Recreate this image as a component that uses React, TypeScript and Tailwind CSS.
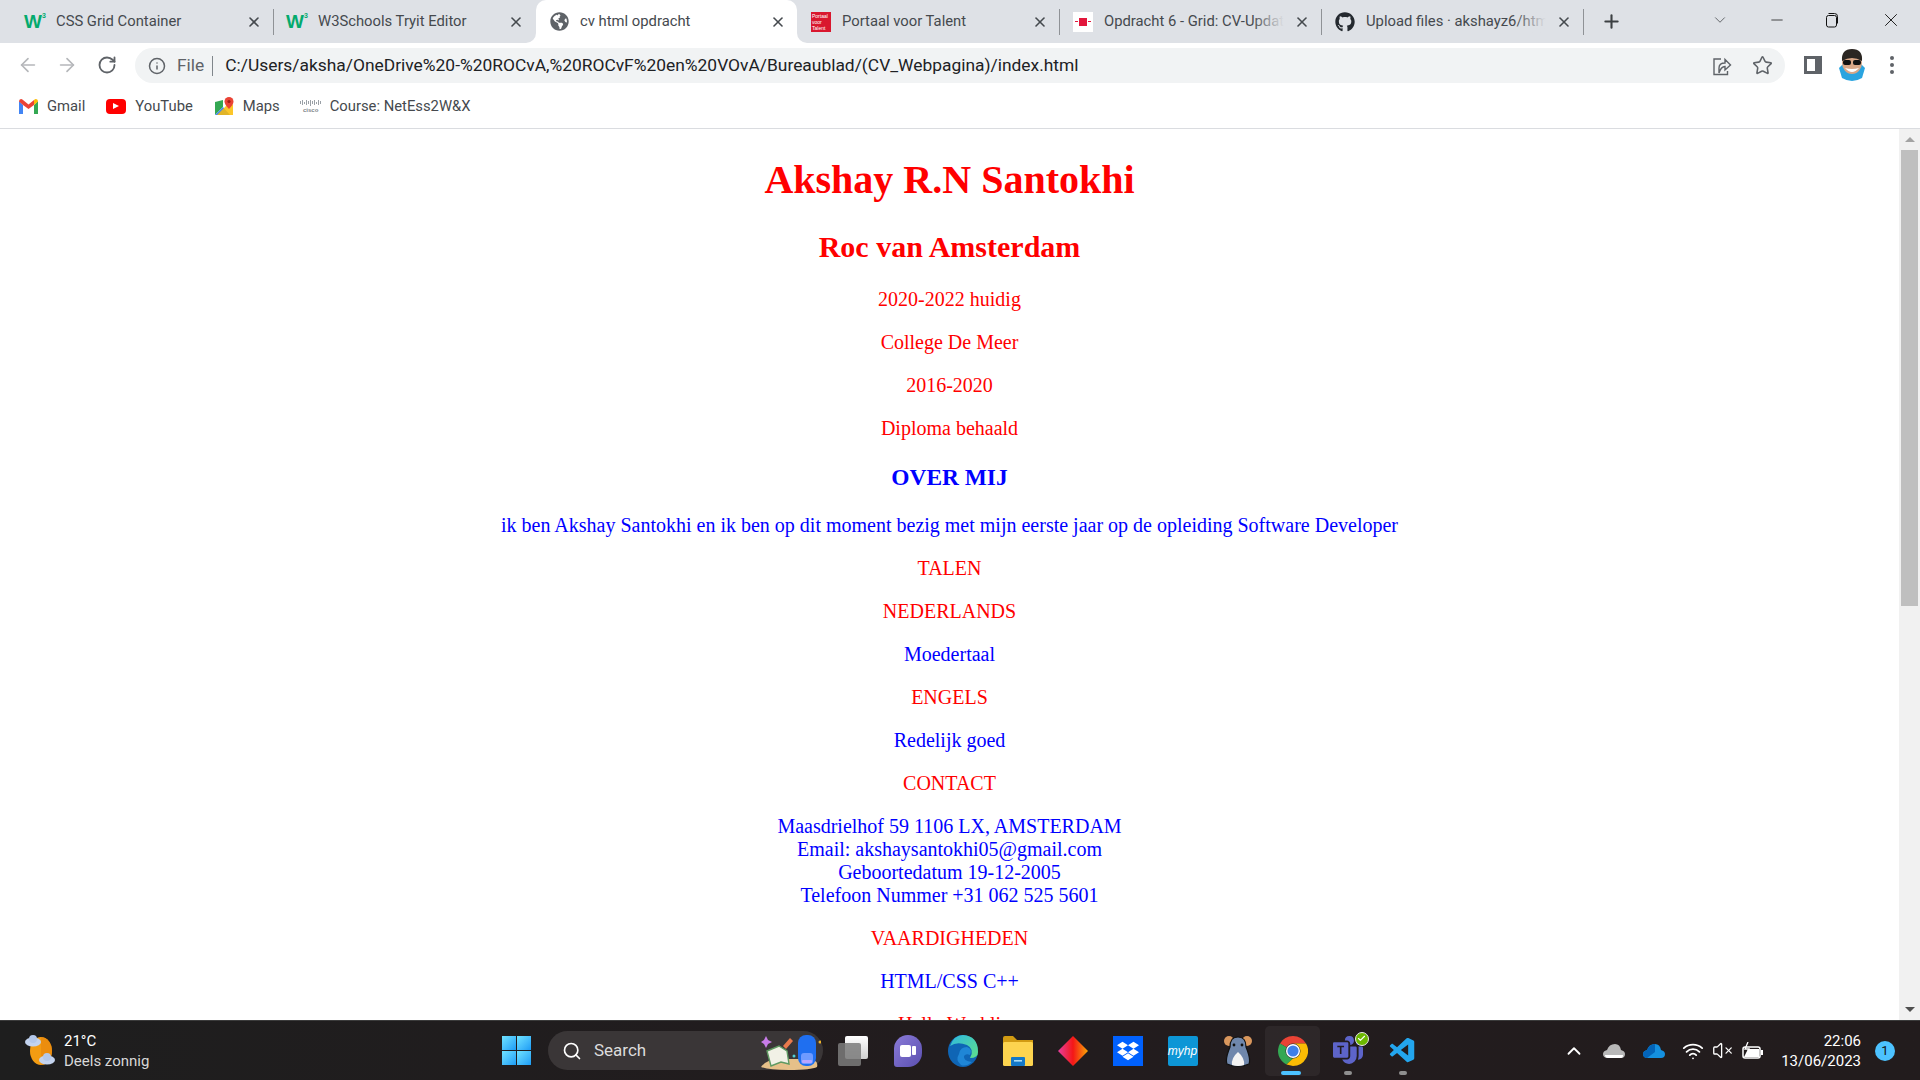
import { ArrowLeft, ArrowRight, Check, ChevronDown, ChevronUp, Info, Minus, Plus, RotateCw, Search, Star, VolumeX, Wifi, X } from "lucide-react";
import { FaGithub, FaGlobeAmericas } from "react-icons/fa";
import { SiDropbox } from "react-icons/si";
import { BsMicrosoftTeams } from "react-icons/bs";
import { VscVscode } from "react-icons/vsc";
import type { ReactNode } from "react";

const uiFont = "font-['Roboto','Open_Sans',sans-serif]";

function W3Icon() {
  return (
    <span className="w-5 flex justify-center items-start font-['Liberation_Sans',sans-serif] font-bold text-[#04aa6d] text-[19px] leading-none">
      W<span className="text-[7px] leading-none">3</span>
    </span>
  );
}

function PortaalIcon() {
  return (
    <span className="w-5 h-5 bg-[#d9172e] text-white text-[5px] leading-[6px] font-['Liberation_Sans',sans-serif] pl-px pt-px block">
      Portaal voor Talent
    </span>
  );
}

function OpdrachtIcon() {
  return (
    <span className="w-5 h-5 bg-white flex items-center justify-center gap-px">
      <span className="w-[3px] h-px bg-[#e2173c]" />
      <span className="w-2 h-2 bg-[#e2173c]" />
      <span className="w-[3px] h-px bg-[#e2173c]" />
    </span>
  );
}

interface TabProps {
  icon: ReactNode;
  title: string;
  active?: boolean;
  separator?: boolean;
  fade?: boolean;
}

function Tab({ icon, title, active, separator, fade }: TabProps) {
  return (
    <>
      <div className={`relative w-[261px] h-[43px] flex items-center pl-[13px] pr-[11px] ${active ? "bg-white rounded-t-[10px]" : ""}`}>
        {active && (
          <>
            <div className="absolute -left-[10px] bottom-0 w-[10px] h-[10px] bg-white">
              <div className="w-full h-full bg-[#dee1e6] rounded-br-[10px]" />
            </div>
            <div className="absolute -right-[10px] bottom-0 w-[10px] h-[10px] bg-white">
              <div className="w-full h-full bg-[#dee1e6] rounded-bl-[10px]" />
            </div>
          </>
        )}
        <div className="w-5 h-5 shrink-0 flex items-center justify-center">{icon}</div>
        <div className="relative flex-1 ml-[11px] mr-[10px] overflow-hidden whitespace-nowrap text-[14.8px] text-[#45494e]">
          {title}
          {fade && <div className="absolute right-0 top-0 bottom-0 w-8 bg-gradient-to-r from-transparent to-[#dee1e6]" />}
        </div>
        <X size={16} strokeWidth={2.4} className="text-[#45494e] shrink-0" />
      </div>
      <div className={`w-px h-[26px] ${separator ? "bg-[#8f9296]" : "bg-transparent"}`} />
    </>
  );
}

function TabStrip() {
  return (
    <div className="h-[43px] bg-[#dee1e6] flex items-center pl-3 shrink-0">
      <Tab icon={<W3Icon />} title="CSS Grid Container" separator />
      <Tab icon={<W3Icon />} title="W3Schools Tryit Editor" />
      <Tab icon={<FaGlobeAmericas size={19} className="text-[#5f6368]" />} title="cv html opdracht" active />
      <Tab icon={<PortaalIcon />} title="Portaal voor Talent" separator />
      <Tab icon={<OpdrachtIcon />} title="Opdracht 6 - Grid: CV-Update" separator fade />
      <Tab icon={<FaGithub size={20} className="text-[#24292f]" />} title="Upload files · akshayz6/html" separator fade />
      <Plus size={21} strokeWidth={2.4} className="text-[#3c4043] ml-[17px]" />
      <div className="flex-1" />
      <div className="flex items-center mb-[4px]">
        <ChevronDown size={18} strokeWidth={1} className="text-[#3c4043] mr-[39px]" />
        <Minus size={18} strokeWidth={1} className="text-[#111] mr-[39px]" />
        <svg width="14" height="16" viewBox="0 0 14 16" fill="none" stroke="#111" className="mr-[41px]">
          <rect x="1.5" y="3.5" width="10" height="11.5" rx="2" />
          <path d="M3.5 1.5h6a3 3 0 0 1 3 3v7" />
        </svg>
        <X size={22} strokeWidth={1} className="text-[#111] mr-[18px]" />
      </div>
    </div>
  );
}

function Avatar() {
  return (
    <svg width="28" height="34" viewBox="0 0 28 34">
      <path d="M1 20 L7 14 L21 14 L27 20 L24 30 Q14 36 4 30 Z" fill="#2aa4e0" />
      <ellipse cx="14" cy="15" rx="10" ry="11" fill="#d9a787" />
      <path d="M4 13 Q3 1 14 1 Q25 1 24 13 Q14 7 4 13 Z" fill="#2b2622" />
      <rect x="5" y="12" width="8" height="5" rx="2" fill="#111" />
      <rect x="15" y="12" width="8" height="5" rx="2" fill="#111" />
      <path d="M7 20 Q14 28 21 20 Q14 22 7 20 Z" fill="#fff" />
    </svg>
  );
}

function Toolbar() {
  return (
    <div className="h-[43px] bg-white flex items-center shrink-0">
      <div className="w-[135px] flex items-center shrink-0 pl-[17px]">
        <ArrowLeft size={22} strokeWidth={1.8} className="text-[#b5b7ba]" />
        <ArrowRight size={22} strokeWidth={1.8} className="text-[#b5b7ba] ml-[17px]" />
        <RotateCw size={20} strokeWidth={2.2} className="text-[#5f6368] ml-[19px]" />
      </div>
      <div className="w-[1650px] h-[35px] mt-[2px] rounded-full bg-[#f1f3f4] flex items-center pl-[13px] pr-[12px]">
        <Info size={18} strokeWidth={2} className="text-[#5f6368] shrink-0" />
        <span className="ml-[11px] text-[17.4px] text-[#5f6368]">File</span>
        <span className="ml-[8px] w-px h-5 bg-[#80868b]" />
        <span className="ml-[12px] text-[17.4px] text-[#202124] whitespace-nowrap">
          C:/Users/aksha/OneDrive%20-%20ROCvA,%20ROCvF%20en%20VOvA/Bureaublad/(CV_Webpagina)/index.html
        </span>
        <div className="flex-1" />
        <svg width="20" height="20" viewBox="0 0 20 20" fill="none" stroke="#5f6368" strokeWidth="1.4">
          <path d="M7 17V12Q7 7 13 7V3.5L18.5 9 13 14V10.5Q9 10.5 7 17Z" />
          <path d="M9 3H2V18.5H15.5V15" />
        </svg>
        <Star size={21} strokeWidth={1.8} className="text-[#5f6368] ml-[20px]" />
      </div>
      <div className="ml-[19px] w-[18px] h-[18px] border-[3px] border-r-[7px] border-[#5f6368] bg-white shrink-0" />
      <div className="ml-[16px] shrink-0"><Avatar /></div>
      <div className="ml-[24px] flex flex-col gap-[3px] shrink-0">
        <span className="w-1 h-1 rounded-full bg-[#5f6368]" />
        <span className="w-1 h-1 rounded-full bg-[#5f6368]" />
        <span className="w-1 h-1 rounded-full bg-[#5f6368]" />
      </div>
    </div>
  );
}

function GmailIcon() {
  return (
    <svg width="19" height="15" viewBox="0 0 19 15">
      <path d="M0 2 L0 15 L4 15 L4 6 Z" fill="#4285f4" />
      <path d="M19 2 L19 15 L15 15 L15 6 Z" fill="#34a853" />
      <path d="M4 6 L0 2.5 Q0 0 2 0 Q3 0 4 1 L9.5 5.5 L15 1 L15 6 L9.5 10 Z" fill="#ea4335" />
      <path d="M15 1 Q16 0 17 0 Q19 0 19 2.5 L15 6 Z" fill="#fbbc04" />
    </svg>
  );
}

function YouTubeIcon() {
  return (
    <span className="w-5 h-[15px] bg-[#f00] rounded-[4px] flex items-center justify-center">
      <span className="w-0 h-0 border-y-[3.5px] border-y-transparent border-l-[6px] border-l-white" />
    </span>
  );
}

function MapsIcon() {
  return (
    <svg width="19" height="19" viewBox="0 0 19 19">
      <path d="M0 5 L8 3 L8 10 L0 18 Z" fill="#34a853" />
      <path d="M0 18 L8 10 L15 18 Z" fill="#4285f4" />
      <path d="M2 18 L15 5 L18 8 L18 18 Z" fill="#fbbc04" opacity="0.85" />
      <path d="M14 0 A4.5 4.5 0 0 1 18.5 4.5 Q18.5 7.5 14 12 Q9.5 7.5 9.5 4.5 A4.5 4.5 0 0 1 14 0 Z" fill="#ea4335" />
      <circle cx="14" cy="4.5" r="1.6" fill="#a51c12" />
    </svg>
  );
}

function CiscoIcon() {
  return (
    <span className="w-5 flex flex-col items-center gap-px">
      <span className="flex items-center gap-px h-[6px]">
        {[3, 5, 2, 5, 3, 6, 3, 5, 2, 5, 3].map((h, i) => (
          <span key={i} className="w-px bg-[#9aa0a6]" style={{ height: h }} />
        ))}
      </span>
      <span className="text-[6px] leading-none text-[#80868b] font-bold font-['Liberation_Sans',sans-serif]">cisco</span>
    </span>
  );
}

function Bookmark({ icon, label, className }: { icon: ReactNode; label: string; className?: string }) {
  return (
    <div className={`flex items-center gap-[9px] ${className ?? ""}`}>
      {icon}
      <span className="text-[14.8px] text-[#45494e] whitespace-nowrap">{label}</span>
    </div>
  );
}

function BookmarksBar() {
  return (
    <div className="h-[43px] bg-white border-b border-[#dadce0] flex items-center pl-[19px] pb-[2px] shrink-0">
      <Bookmark icon={<GmailIcon />} label="Gmail" />
      <Bookmark icon={<YouTubeIcon />} label="YouTube" className="ml-[21px]" />
      <Bookmark icon={<MapsIcon />} label="Maps" className="ml-[22px]" />
      <Bookmark icon={<CiscoIcon />} label="Course: NetEss2W&X" className="ml-[21px]" />
    </div>
  );
}

function Line({ children, color }: { children: ReactNode; color: string }) {
  return <p className={`my-5 ${color}`}>{children}</p>;
}

function Page() {
  return (
    <div className="flex-1 min-w-0 bg-white overflow-hidden px-[10px] text-center font-['Liberation_Serif',serif] text-[20px] leading-[23px]">
      <h1 className="mt-[28px] mb-[27px] text-[40px] leading-[46px] font-bold text-[#f00]">Akshay R.N Santokhi</h1>
      <h2 className="mt-[25px] mb-[24px] text-[30px] leading-[34px] font-bold text-[#f00]">Roc van Amsterdam</h2>
      <Line color="text-[#f00]">2020-2022 huidig</Line>
      <Line color="text-[#f00]">College De Meer</Line>
      <Line color="text-[#f00]">2016-2020</Line>
      <Line color="text-[#f00]">Diploma behaald</Line>
      <h3 className="mt-[24px] mb-[23px] text-[23.4px] leading-[27px] font-bold text-[#00f]">OVER MIJ</h3>
      <Line color="text-[#00f]">ik ben Akshay Santokhi en ik ben op dit moment bezig met mijn eerste jaar op de opleiding Software Developer</Line>
      <Line color="text-[#f00]">TALEN</Line>
      <Line color="text-[#f00]">NEDERLANDS</Line>
      <Line color="text-[#00f]">Moedertaal</Line>
      <Line color="text-[#f00]">ENGELS</Line>
      <Line color="text-[#00f]">Redelijk goed</Line>
      <Line color="text-[#f00]">CONTACT</Line>
      <Line color="text-[#00f]">
        Maasdrielhof 59 1106 LX, AMSTERDAM<br />
        Email: akshaysantokhi05@gmail.com<br />
        Geboortedatum 19-12-2005<br />
        Telefoon Nummer +31 062 525 5601
      </Line>
      <Line color="text-[#f00]">VAARDIGHEDEN</Line>
      <Line color="text-[#00f]">HTML/CSS C++</Line>
      <Line color="text-[#f00]">Hallo Werkli</Line>
    </div>
  );
}

function Scrollbar() {
  return (
    <div className="w-[21px] shrink-0 bg-[#f1f1f1] flex flex-col items-center">
      <div className="h-[21px] flex items-center justify-center shrink-0">
        <span className="w-0 h-0 border-x-[5px] border-x-transparent border-b-[5px] border-b-[#a3a3a3]" />
      </div>
      <div className="w-[17px] h-[456px] bg-[#bfbfbf]" />
      <div className="flex-1" />
      <div className="h-[21px] flex items-center justify-center shrink-0">
        <span className="w-0 h-0 border-x-[5px] border-x-transparent border-t-[5px] border-t-[#505050]" />
      </div>
    </div>
  );
}

function WeatherIcon() {
  return (
    <svg width="32" height="34" viewBox="0 0 32 34">
      <ellipse cx="17" cy="17" rx="11" ry="14" fill="#f39c12" />
      <path d="M17 3 A11 14 0 0 1 17 31 Z" fill="#e8830c" opacity="0.6" />
      <ellipse cx="9" cy="8" rx="8" ry="4.5" fill="#c3d3ee" />
      <circle cx="9" cy="5" r="4" fill="#b4c8ea" />
      <ellipse cx="23" cy="26" rx="8" ry="4.5" fill="#c3d3ee" />
      <circle cx="23" cy="23" r="4" fill="#b4c8ea" />
    </svg>
  );
}

function WindowsLogo() {
  const pane = "w-[14px] h-[14px] bg-gradient-to-br from-[#6fe3ff] to-[#1a9cf5]";
  return (
    <div className="grid grid-cols-2 gap-px w-[29px] h-[29px] shrink-0">
      <div className={pane} />
      <div className={pane} />
      <div className={pane} />
      <div className={pane} />
    </div>
  );
}

function SearchSticker() {
  return (
    <svg width="60" height="38" viewBox="0 0 60 38">
      <path d="M0 35 Q6 27 18 27 L46 27 Q58 27 56 35 Q50 38 28 38 Q8 38 0 35 Z" fill="#e6c089" />
      <path d="M6 19 L18 14 L26 19 L28 32 L20 30 L10 34 Z" fill="#f1f1e6" stroke="#5f9a62" strokeWidth="1.4" />
      <path d="M22 14 L29 6 L32 9 L25 17 Z" fill="#e8794c" />
      <rect x="37" y="3" width="18" height="31" rx="8" fill="#1f6ff0" />
      <rect x="40" y="21" width="12" height="11" rx="3" fill="#6e9bff" />
      <rect x="41" y="28" width="10" height="3" rx="1" fill="#b9a6ff" />
      <circle cx="59" cy="10" r="1.5" fill="#f0b429" />
      <circle cx="33" cy="24" r="1.5" fill="#4fd0d8" />
      <path d="M3 8 L5 4 L7 8 L11 10 L7 12 L5 16 L3 12 L0 10 Z" fill="#c77ce8" />
    </svg>
  );
}

function TaskViewIcon() {
  return (
    <div className="relative w-[30px] h-[30px]">
      <div className="absolute right-0 top-0 w-[23px] h-[23px] rounded-[2px] bg-gradient-to-b from-[#fff] to-[#d0d0d0]" />
      <div className="absolute left-0 bottom-0 w-[23px] h-[23px] rounded-[2px] bg-[#7b7b7b]/85" />
    </div>
  );
}

function MeetIcon() {
  return (
    <div className="relative w-[28px] h-[32px] rounded-[14px] rounded-bl-[3px] bg-gradient-to-br from-[#8b7bd8] to-[#5b4fb0] flex items-center justify-center gap-px">
      <div className="w-[11px] h-[12px] rounded-[2px] bg-white" />
      <div className="w-[4px] h-[9px] rounded-[1px] bg-white" />
    </div>
  );
}

function EdgeIcon() {
  return (
    <svg width="30" height="32" viewBox="0 0 30 32">
      <defs>
        <linearGradient id="edgeTop" x1="0" y1="0" x2="1" y2="1">
          <stop offset="0" stopColor="#2fb8e0" />
          <stop offset="1" stopColor="#5fe08a" />
        </linearGradient>
      </defs>
      <ellipse cx="15" cy="16" rx="15" ry="16" fill="#0f65b5" />
      <path d="M2 11 Q6 0 15 0 Q30 1 30 17 Q30 23 22 23 Q27 14 19 10 Q9 6 2 11 Z" fill="url(#edgeTop)" />
      <path d="M11 19 Q12 12 19 12 Q25 14 22 20 Q18 18 16 21 Q15 26 24 27 Q18 32 13 30 Q7 25 11 19 Z" fill="#1f86d6" />
    </svg>
  );
}

function ExplorerIcon() {
  return (
    <svg width="30" height="30" viewBox="0 0 30 30">
      <path d="M0 2 Q0 0 2 0 L10 0 L14 4 L30 4 L30 10 L0 10 Z" fill="#d29b12" />
      <rect x="0" y="6" width="30" height="24" rx="1.5" fill="#fdd44f" />
      <rect x="8" y="21" width="14" height="9" rx="1" fill="#1378c8" />
      <rect x="11" y="24" width="8" height="1.6" fill="#a8dcf8" />
    </svg>
  );
}

function DiamondIcon() {
  return (
    <svg width="30" height="30" viewBox="0 0 30 30">
      <defs>
        <linearGradient id="diamondFill" x1="0" y1="0" x2="1" y2="0">
          <stop offset="0" stopColor="#e83fa0" />
          <stop offset="0.5" stopColor="#f41717" />
          <stop offset="1" stopColor="#f9a806" />
        </linearGradient>
      </defs>
      <path d="M15 0 L30 15 L15 30 L0 15 Z" fill="url(#diamondFill)" />
    </svg>
  );
}

function MouseIcon() {
  return (
    <svg width="30" height="34" viewBox="0 0 30 34">
      <circle cx="6" cy="7" r="5" fill="#d9975d" />
      <circle cx="24" cy="7" r="5" fill="#d9975d" />
      <path d="M15 3 Q23 3 23 13 Q28 25 26 30 Q15 35 4 30 Q2 25 7 13 Q7 3 15 3 Z" fill="#6f87ac" stroke="#111" strokeWidth="1.2" />
      <path d="M15 18 Q22 24 21 31 Q15 33 9 31 Q8 24 15 18 Z" fill="#f3f3f3" />
      <circle cx="11" cy="11" r="1.4" fill="#111" />
      <circle cx="19" cy="11" r="1.4" fill="#111" />
    </svg>
  );
}

function ChromeIcon() {
  return (
    <svg width="30" height="30" viewBox="0 0 30 30">
      <path d="M15 0 A15 15 0 0 1 28 7.5 L15 7.5 A7.5 7.5 0 0 0 8.5 11.3 L2 7.5 A15 15 0 0 1 15 0 Z" fill="#ea4335" />
      <path d="M2 7.5 L8.5 11.3 A7.5 7.5 0 0 0 15 22.5 L8.5 28.5 A15 15 0 0 1 2 7.5 Z" fill="#34a853" />
      <path d="M28 7.5 A15 15 0 0 1 15 30 L8.5 28.5 L15 22.5 A7.5 7.5 0 0 0 15 7.5 Z" fill="#fbbc04" />
      <circle cx="15" cy="15" r="7" fill="#fff" />
      <circle cx="15" cy="15" r="5.6" fill="#3f7fe8" />
    </svg>
  );
}

function TaskIcon({ children, active, running }: { children: ReactNode; active?: boolean; running?: boolean }) {
  return (
    <div className={`relative w-[55px] h-[50px] flex items-center justify-center shrink-0 ${active ? "rounded-[5px] bg-white/5" : ""}`}>
      {children}
      {active && <div className="absolute bottom-[1px] left-[16px] w-[20px] h-[4px] rounded-full bg-[#4cc2ff]" />}
      {running && <div className="absolute bottom-[1px] left-[24px] w-[8px] h-[4px] rounded-full bg-[#8f8f8f]" />}
    </div>
  );
}

function Taskbar() {
  return (
    <div className="h-[60px] bg-gradient-to-r from-[#1e1e1e] via-[#221c1e] to-[#221c1d] border-t border-[#3b3b3b] flex items-center shrink-0 text-white">
      <div className="w-[502px] pl-[24px] flex items-center gap-[8px] shrink-0">
        <WeatherIcon />
        <div className="text-[15px] leading-[20px]">
          <div>21°C</div>
          <div className="text-[#d8d8d8]">Deels zonnig</div>
        </div>
      </div>
      <WindowsLogo />
      <div className="ml-[17px] w-[275px] h-[39px] rounded-full bg-[#3a3637] flex items-center pl-[14px] pr-[2px] shrink-0">
        <Search size={20} strokeWidth={2} className="text-white" />
        <span className="ml-[12px] text-[17px] text-[#dcdcdc]">Search</span>
        <div className="flex-1" />
        <SearchSticker />
      </div>
      <div className="ml-[2px] flex items-center">
        <TaskIcon><TaskViewIcon /></TaskIcon>
        <TaskIcon><MeetIcon /></TaskIcon>
        <TaskIcon><EdgeIcon /></TaskIcon>
        <TaskIcon><ExplorerIcon /></TaskIcon>
        <TaskIcon><DiamondIcon /></TaskIcon>
        <TaskIcon>
          <div className="w-[30px] h-[30px] bg-[#0061fe] flex items-center justify-center">
            <SiDropbox size={22} className="text-white" />
          </div>
        </TaskIcon>
        <TaskIcon>
          <div className="w-[30px] h-[30px] rounded-[2px] bg-[#0d96d6] flex items-center justify-center text-[12px] italic text-white font-['Liberation_Sans',sans-serif]">
            myhp
          </div>
        </TaskIcon>
        <TaskIcon><MouseIcon /></TaskIcon>
        <TaskIcon active><ChromeIcon /></TaskIcon>
        <TaskIcon running>
          <div className="relative">
            <BsMicrosoftTeams size={30} className="text-[#5d64c9]" />
            <div className="absolute -top-[4px] -right-[6px] w-[14px] h-[14px] rounded-full bg-[#6bb700] border border-[#e8e8e8] flex items-center justify-center">
              <Check size={9} strokeWidth={3} className="text-white" />
            </div>
          </div>
        </TaskIcon>
        <TaskIcon running><VscVscode size={30} className="text-[#23a6ee]" /></TaskIcon>
      </div>
      <div className="flex-1" />
      <div className="flex items-center text-white shrink-0">
        <ChevronUp size={22} strokeWidth={2} />
        <svg width="22" height="14" viewBox="0 0 22 14" className="ml-[18px]">
          <path d="M5 14 Q0 14 0 10 Q0 7 4 6 Q6 0 12 0 Q17 0 18 6 Q22 7 22 10 Q22 14 18 14 Z" fill="#b8b8b8" />
          <path d="M5 14 Q2 14 2 11 L20 11 Q20 14 18 14 Z" fill="#fff" />
        </svg>
        <svg width="22" height="14" viewBox="0 0 22 14" className="ml-[18px]">
          <path d="M5 14 Q0 14 0 10 Q0 7 4 6 Q6 0 12 0 Q17 0 18 6 Q22 7 22 10 Q22 14 18 14 Z" fill="#1490df" />
          <path d="M0 10 Q0 7 4 6 Q6 0 12 0 L12 8 L4 14 Q0 14 0 10 Z" fill="#0364b8" />
        </svg>
        <Wifi size={22} strokeWidth={2} className="ml-[17px]" />
        <VolumeX size={21} strokeWidth={1.5} className="ml-[8px]" />
        <svg width="22" height="18" viewBox="0 0 22 18" fill="none" stroke="#fff" strokeWidth="1.5" className="ml-[9px]">
          <rect x="1" y="5" width="17" height="11" rx="2" />
          <rect x="19" y="8" width="2" height="5" fill="#fff" stroke="none" />
          <path d="M2 15 L6 7 H17 V15 Z" fill="#fff" stroke="none" />
          <path d="M6 0 L3 7 H7 L5 12" stroke="#fff" strokeWidth="1.3" />
        </svg>
      </div>
      <div className="ml-[4px] w-[93px] text-right text-[15px] leading-[20px] text-white shrink-0">
        <div>22:06</div>
        <div>13/06/2023</div>
      </div>
      <div className="ml-[14px] mr-[25px] w-5 h-5 rounded-full bg-[#4cc2ff] text-[#111] text-[13px] flex items-center justify-center shrink-0">1</div>
    </div>
  );
}

export default function App() {
  return (
    <div className={`h-screen w-full flex flex-col overflow-hidden ${uiFont}`}>
      <TabStrip />
      <Toolbar />
      <BookmarksBar />
      <div className="flex-1 min-h-0 flex">
        <Page />
        <Scrollbar />
      </div>
      <Taskbar />
    </div>
  );
}
